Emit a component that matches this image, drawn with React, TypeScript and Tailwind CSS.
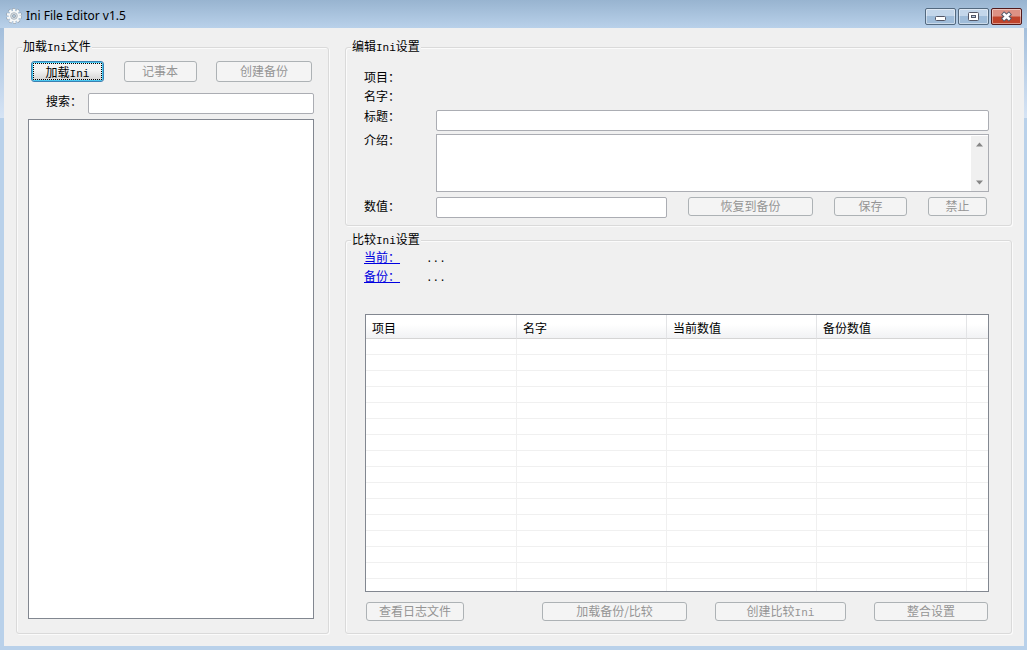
import type { ButtonHTMLAttributes, ReactNode } from "react";

const columns = [
  { title: "项目", width: "w-[151px]" },
  { title: "名字", width: "w-[150px]" },
  { title: "当前数值", width: "w-[150px]" },
  { title: "备份数值", width: "w-[150px]" },
];

const emptyRows = Array.from({ length: 16 }, (_, i) => i);

function Latin({ children }: { children: ReactNode }) {
  return <span className="font-['Liberation_Mono',monospace] text-[11px] leading-none">{children}</span>;
}

function Group({ title, className, children }: { title: string; className: string; children: ReactNode }) {
  const [before, after] = title.split("Ini");
  return (
    <fieldset
      className={`flex min-w-0 flex-col rounded-[3px] border border-[#dadada] shadow-[1px_1px_0_#fbfbfb,inset_1px_1px_0_#fbfbfb] ${className}`}
    >
      <legend className="ml-[5px] h-4 bg-[#f0f0f0] px-px leading-[14px]">
        {before}
        <Latin>Ini</Latin>
        {after}
      </legend>
      {children}
    </fieldset>
  );
}

function DisabledButton({ className, ...rest }: ButtonHTMLAttributes<HTMLButtonElement>) {
  return (
    <button
      type="button"
      disabled
      className={`flex shrink-0 items-center justify-center whitespace-nowrap rounded-[3px] border border-[#adb2b5] bg-[#f4f4f4] pb-[2px] leading-4 text-[#959595] ${className}`}
      {...rest}
    />
  );
}

const field = "min-w-0 rounded-[2px] border border-[#abadb3] bg-white px-1 outline-none";

const captionButton =
  "flex h-[17px] w-[31px] items-center justify-center rounded-[2px] border shadow-[inset_0_0_0_1px_rgba(255,255,255,0.45)]";

function TitleBar() {
  return (
    <header className="flex h-7 shrink-0 items-center bg-linear-to-b from-[#98b4d0] to-[#b9d1ea] pl-[6px] pr-[5px] pt-1">
      <svg width="16" height="16" viewBox="0 0 16 16" aria-hidden="true">
        <circle cx="8" cy="8" r="6.2" fill="none" stroke="#8d99a5" strokeWidth="3.4" strokeDasharray="2.5 1.37" />
        <circle cx="8" cy="8" r="6" fill="none" stroke="#f5f7f8" strokeWidth="2.6" strokeDasharray="2.4 1.37" />
        <circle cx="8" cy="8" r="4.4" fill="#dfe4e8" stroke="#f6f8f9" strokeWidth="1.8" />
        <circle cx="8" cy="8" r="3.3" fill="none" stroke="#a3adb7" strokeWidth="0.8" />
        <circle cx="8" cy="8" r="1.6" fill="#b3c8dc" stroke="#8c98a4" strokeWidth="0.7" />
      </svg>
      <h1 className="ml-1 font-['Noto_Sans',sans-serif] text-xs leading-4 text-black">Ini File Editor v1.5</h1>
      <div className="ml-auto flex gap-[2px]">
        <button
          type="button"
          aria-label="最小化"
          className={`${captionButton} border-[#53697f] bg-linear-to-b from-[#c3d6ea] from-50% to-[#9fbcd9] to-50%`}
        >
          <svg width="13" height="13" viewBox="0 0 13 13" aria-hidden="true">
            <rect x="1.5" y="6.5" width="10" height="4" rx="1" fill="#fff" stroke="#535666" />
          </svg>
        </button>
        <button
          type="button"
          aria-label="最大化"
          className={`${captionButton} border-[#53697f] bg-linear-to-b from-[#c3d6ea] from-50% to-[#9fbcd9] to-50%`}
        >
          <svg width="13" height="13" viewBox="0 0 13 13" aria-hidden="true">
            <rect x="1.5" y="2.5" width="10" height="8" rx="1" fill="#fff" stroke="#535666" />
            <rect x="4.5" y="5.5" width="4" height="2" fill="#b9cfe5" stroke="#535666" />
          </svg>
        </button>
        <button
          type="button"
          aria-label="关闭"
          className={`${captionButton} border-[#521a1b] bg-linear-to-b from-[#dd9184] from-45% to-[#c0432b] to-55%`}
        >
          <svg width="13" height="13" viewBox="0 0 13 13" aria-hidden="true">
            <path d="M2.5 3 L10.5 10 M10.5 3 L2.5 10" stroke="#535666" strokeWidth="4.6" />
            <path d="M3.2 3.6 L9.8 9.4 M9.8 3.6 L3.2 9.4" stroke="#fff" strokeWidth="2.6" />
          </svg>
        </button>
      </div>
    </header>
  );
}

function LoadGroup() {
  return (
    <Group title="加载Ini文件" className="w-[313px] shrink-0">
      <div className="flex min-h-0 flex-1 flex-col pb-[14px] pl-[11px] pr-[14px] pt-[6px]">
        <div className="flex justify-between pl-[3px] pr-[2px]">
          <button
            type="button"
            className="flex h-[21px] w-[73px] rounded-[3px] border border-[#3c7fb1] bg-linear-to-b from-[#f2f2f2] from-45% to-[#d2d2d2] p-px shadow-[inset_0_0_0_1px_#48c8f0]"
          >
            <span className="flex h-full w-full items-center justify-center border border-dotted border-black leading-4">
              <span>
                加载<Latin>Ini</Latin>
              </span>
            </span>
          </button>
          <DisabledButton className="h-[21px] w-[73px]">记事本</DisabledButton>
          <DisabledButton className="h-[21px] w-[96px]">创建备份</DisabledButton>
        </div>
        <div className="mt-[11px] flex">
          <label htmlFor="search" className="w-[60px] pl-[18px] leading-4">
            搜索：
          </label>
          <input id="search" type="text" className={`h-[21px] flex-1 ${field}`} />
        </div>
        <div
          role="listbox"
          aria-label="加载Ini文件"
          className="mt-[5px] min-h-0 flex-1 border border-[#828790] bg-white"
        />
      </div>
    </Group>
  );
}

function EditGroup() {
  return (
    <Group title="编辑Ini设置" className="shrink-0">
      <div className="flex flex-col pb-[7px] pl-[18px] pr-[22px] pt-3">
        <div className="h-[19px] leading-5">项目：</div>
        <div className="h-[19px] leading-5">名字：</div>
        <div className="mt-[5px] flex">
          <label htmlFor="title" className="w-[72px] leading-3">
            标题：
          </label>
          <input id="title" type="text" className={`h-[21px] flex-1 ${field}`} />
        </div>
        <div className="mt-[3px] flex">
          <label htmlFor="intro" className="w-[72px] leading-3">
            介绍：
          </label>
          <div className="flex h-[58px] flex-1 border border-[#abadb3] bg-white">
            <textarea id="intro" className="min-w-0 flex-1 resize-none overflow-hidden bg-white px-1 outline-none" />
            <div className="mt-px flex w-[17px] flex-col items-center justify-between bg-[#f0f0f0] py-[6px]">
              <svg width="9" height="5" viewBox="0 0 9 5" aria-hidden="true">
                <path d="M4.5 0.5 L8 4.5 H1 Z" fill="#868686" />
              </svg>
              <svg width="9" height="5" viewBox="0 0 9 5" aria-hidden="true">
                <path d="M4.5 4.5 L8 0.5 H1 Z" fill="#868686" />
              </svg>
            </div>
          </div>
        </div>
        <div className="mt-[5px] flex">
          <label htmlFor="value" className="w-[72px] leading-[18px]">
            数值：
          </label>
          <div className="flex min-w-0 flex-1 gap-[21px] pr-[2px]">
            <input id="value" type="text" className={`h-[21px] w-0 flex-1 ${field}`} />
            <DisabledButton className="h-[19px] w-[125px]">恢复到备份</DisabledButton>
            <DisabledButton className="h-[19px] w-[73px]">保存</DisabledButton>
            <DisabledButton className="h-[19px] w-[59px]">禁止</DisabledButton>
          </div>
        </div>
      </div>
    </Group>
  );
}

function CompareGroup() {
  return (
    <Group title="比较Ini设置" className="min-h-0 flex-1">
      <div className="flex min-h-0 flex-1 flex-col pb-3 pl-[18px] pr-[22px]">
        <div className="flex h-[19px] gap-[26px] leading-[18px]">
          <a href="#current" className="text-[#0000e0] underline">
            当前：
          </a>
          <span>
            <Latin>...</Latin>
          </span>
        </div>
        <div className="flex h-[19px] gap-[26px] leading-[18px]">
          <a href="#backup" className="text-[#0000e0] underline">
            备份：
          </a>
          <span>
            <Latin>...</Latin>
          </span>
        </div>
        <div className="ml-px mt-7 min-h-0 flex-1 overflow-hidden border border-[#828790] bg-white">
          <table className="w-full table-fixed border-separate border-spacing-0">
            <thead>
              <tr className="h-6">
                {columns.map((c) => (
                  <th
                    key={c.title}
                    scope="col"
                    className={`${c.width} border-b border-r border-b-[#d5d5d5] border-r-[#e3e4e6] bg-linear-to-b from-white from-40% to-[#f1f2f4] p-0 pl-[6px] pt-[2px] text-left font-normal leading-4`}
                  >
                    {c.title}
                  </th>
                ))}
                <td className="border-b border-[#d5d5d5] bg-linear-to-b from-white from-40% to-[#f1f2f4] p-0" />
              </tr>
            </thead>
            <tbody>
              {emptyRows.map((row) => (
                <tr key={row} className="h-4">
                  {columns.map((c) => (
                    <td key={c.title} className="border-b border-r border-[#f0f0f0] p-0" />
                  ))}
                  <td className="border-b border-[#f0f0f0] p-0" />
                </tr>
              ))}
            </tbody>
          </table>
        </div>
        <div className="mt-[10px] flex gap-7 pl-[2px] pr-px">
          <DisabledButton className="mr-auto h-[19px] w-[98px]">查看日志文件</DisabledButton>
          <DisabledButton className="h-[19px] w-[145px]">加载备份/比较</DisabledButton>
          <DisabledButton className="h-[19px] w-[131px]">
            <span>
              创建比较<Latin>Ini</Latin>
            </span>
          </DisabledButton>
          <DisabledButton className="h-[19px] w-[114px]">整合设置</DisabledButton>
        </div>
      </div>
    </Group>
  );
}

export default function App() {
  return (
    <div
      lang="zh-CN"
      className="flex h-screen min-h-[480px] min-w-[960px] flex-col bg-[#b9d1ea] bg-[linear-gradient(to_bottom,#a3bedb_28px,#d6e4f5_118px,#b9d1ea_118px)] pb-1 font-['Noto_Sans_CJK_SC',sans-serif] text-xs text-black"
    >
      <TitleBar />
      <main className="ml-1 mr-[3px] flex min-h-0 flex-1 gap-4 bg-[#f0f0f0] px-3 pb-3 pt-[11px]">
        <LoadGroup />
        <div className="flex min-w-0 flex-1 flex-col gap-[6px]">
          <EditGroup />
          <CompareGroup />
        </div>
      </main>
    </div>
  );
}
